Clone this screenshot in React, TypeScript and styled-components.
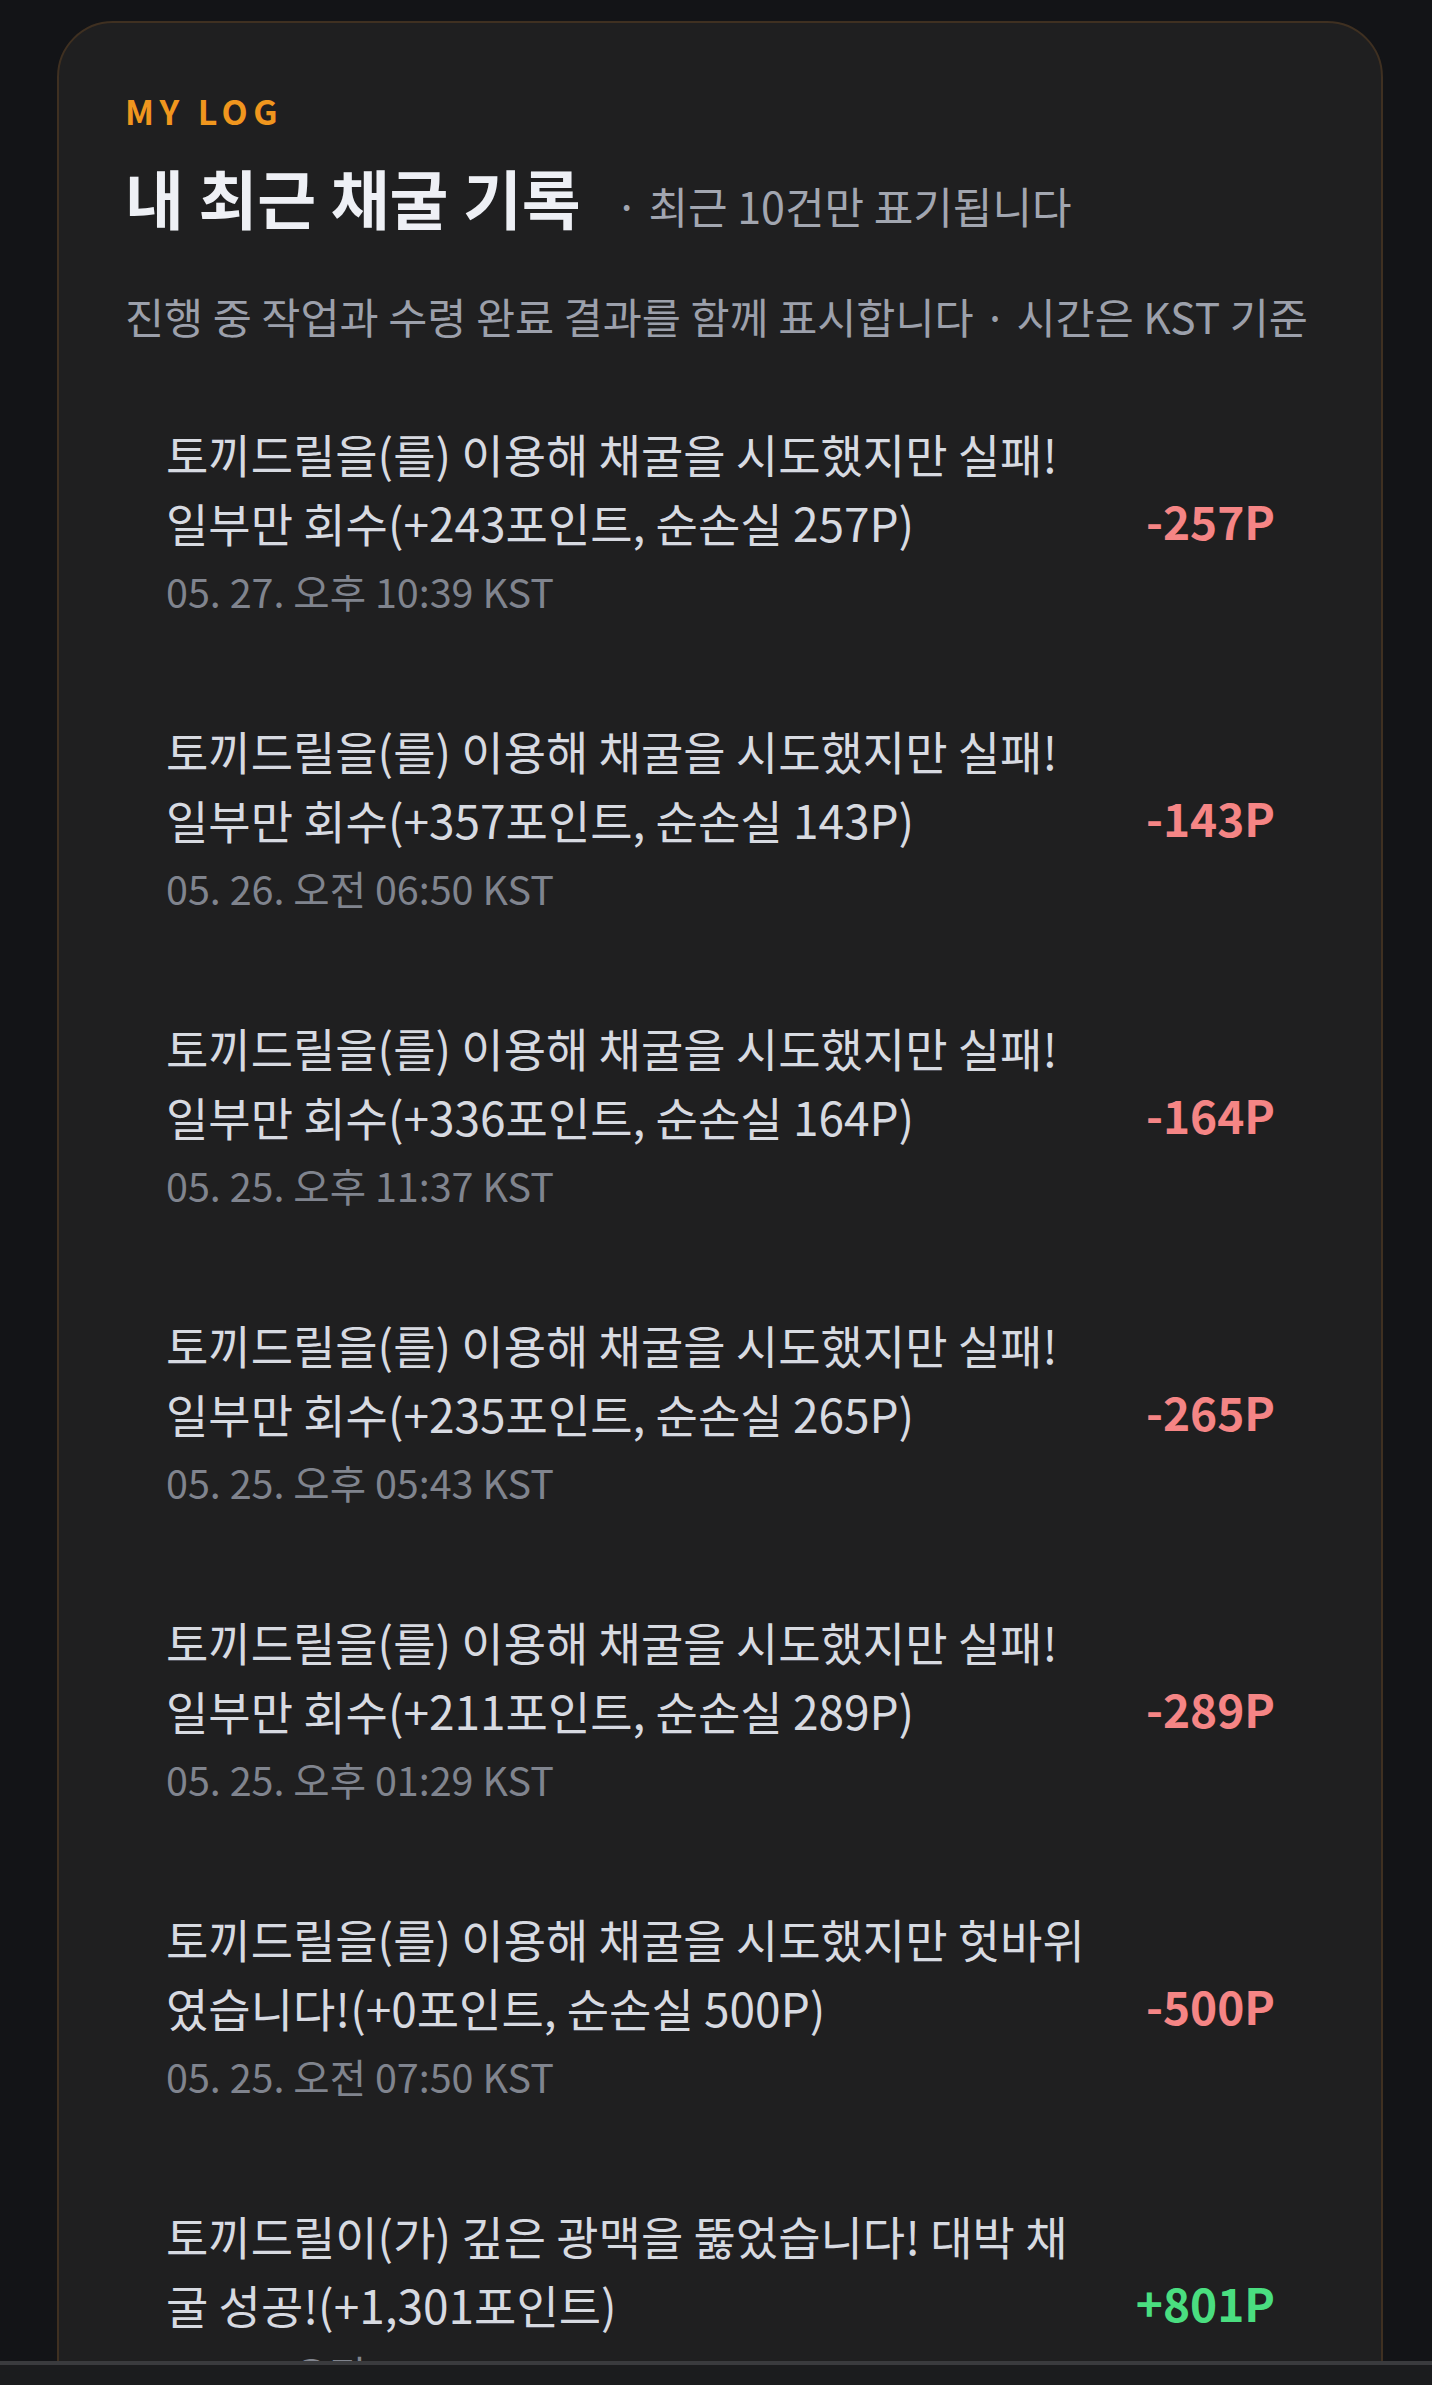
import React from "react";
import styled, { createGlobalStyle } from "styled-components";

type LogEntry = {
  message: string;
  time: string;
  amount: string;
  gain: boolean;
};

const LOGS: LogEntry[] = [
  {
    message: "토끼드릴을(를) 이용해 채굴을 시도했지만 실패! 일부만 회수(+243포인트, 순손실 257P)",
    time: "05. 27. 오후 10:39 KST",
    amount: "-257P",
    gain: false,
  },
  {
    message: "토끼드릴을(를) 이용해 채굴을 시도했지만 실패! 일부만 회수(+357포인트, 순손실 143P)",
    time: "05. 26. 오전 06:50 KST",
    amount: "-143P",
    gain: false,
  },
  {
    message: "토끼드릴을(를) 이용해 채굴을 시도했지만 실패! 일부만 회수(+336포인트, 순손실 164P)",
    time: "05. 25. 오후 11:37 KST",
    amount: "-164P",
    gain: false,
  },
  {
    message: "토끼드릴을(를) 이용해 채굴을 시도했지만 실패! 일부만 회수(+235포인트, 순손실 265P)",
    time: "05. 25. 오후 05:43 KST",
    amount: "-265P",
    gain: false,
  },
  {
    message: "토끼드릴을(를) 이용해 채굴을 시도했지만 실패! 일부만 회수(+211포인트, 순손실 289P)",
    time: "05. 25. 오후 01:29 KST",
    amount: "-289P",
    gain: false,
  },
  {
    message: "토끼드릴을(를) 이용해 채굴을 시도했지만 헛바위였습니다!(+0포인트, 순손실 500P)",
    time: "05. 25. 오전 07:50 KST",
    amount: "-500P",
    gain: false,
  },
  {
    message: "토끼드릴이(가) 깊은 광맥을 뚫었습니다! 대박 채굴 성공!(+1,301포인트)",
    time: "05. 25. 오전 03:21 KST",
    amount: "+801P",
    gain: true,
  },
];

const GlobalStyle = createGlobalStyle`
  html, body {
    margin: 0;
    padding: 0;
    background: #131417;
  }
  body {
    font-family: "Noto Sans CJK KR", "Noto Sans", sans-serif;
    overflow: hidden;
  }
  * {
    box-sizing: border-box;
  }
`;

const Page = styled.div`
  height: 2385px;
  overflow: hidden;
  padding: 21px 49px 0 57px;
  background: #131417;
`;

const Card = styled.section`
  background: #1f1f20;
  border: 2px solid #3f3021;
  border-radius: 56px;
  padding: 67px 66px 60px;
  min-height: 2600px;
`;

const Eyebrow = styled.div`
  font-size: 34px;
  line-height: 41px;
  font-weight: 700;
  letter-spacing: 0.16em;
  color: #f0961e;
`;

const TitleRow = styled.div`
  display: flex;
  align-items: baseline;
  gap: 34px;
  margin-top: 27px;
`;

const Title = styled.h2`
  margin: 0;
  font-size: 64px;
  line-height: 76px;
  font-weight: 700;
  color: #eef0f5;
`;

const TitleNote = styled.span`
  font-size: 43px;
  color: #a2a6b0;
`;

const Description = styled.p`
  margin: 50px 0 0;
  font-size: 42.5px;
  line-height: 60px;
  color: #9ca0ab;
`;

const List = styled.ul`
  list-style: none;
  margin: 33px 0 0;
  padding: 0;
  display: flex;
  flex-direction: column;
  gap: 16px;
`;

const Item = styled.li`
  display: flex;
  align-items: center;
  justify-content: space-between;
  padding: 40px 40px 40px 41px;
`;

const ItemBody = styled.div`
  flex: 0 1 930px;
  min-width: 0;
`;

const Message = styled.div`
  font-size: 46px;
  line-height: 68.5px;
  color: #d7dae1;
`;

const Time = styled.div`
  margin-top: 5px;
  font-size: 39.5px;
  line-height: 59px;
  color: #80848e;
`;

const Amount = styled.div<{ $gain: boolean }>`
  flex-shrink: 0;
  font-size: 46px;
  font-weight: 700;
  color: ${(p) => (p.$gain ? "#4ade80" : "#f58585")};
`;

const BottomBar = styled.div`
  position: fixed;
  left: 0;
  right: 0;
  bottom: 0;
  height: 24px;
  background: #1b1c1e;
  border-top: 4px solid #3a3b3e;
`;

export default function App() {
  return (
    <>
      <GlobalStyle />
      <Page>
        <Card>
          <Eyebrow>MY LOG</Eyebrow>
          <TitleRow>
            <Title>내 최근 채굴 기록</Title>
            <TitleNote>· 최근 10건만 표기됩니다</TitleNote>
          </TitleRow>
          <Description>
            진행 중 작업과 수령 완료 결과를 함께 표시합니다 · 시간은 KST 기준
          </Description>
          <List>
            {LOGS.map((log, i) => (
              <Item key={i}>
                <ItemBody>
                  <Message>{log.message}</Message>
                  <Time>{log.time}</Time>
                </ItemBody>
                <Amount $gain={log.gain}>{log.amount}</Amount>
              </Item>
            ))}
          </List>
        </Card>
      </Page>
      <BottomBar />
    </>
  );
}
